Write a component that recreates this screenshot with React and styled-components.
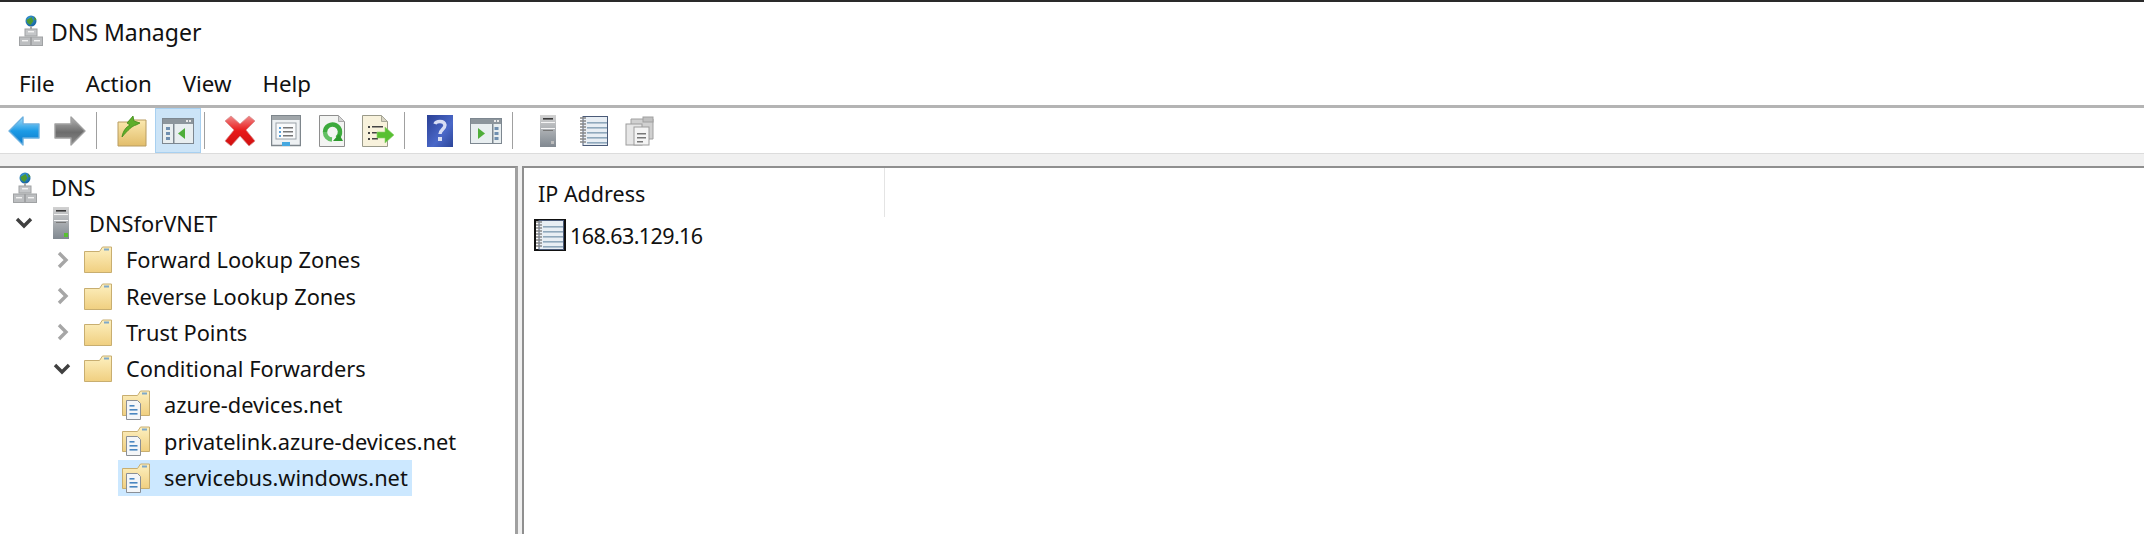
import React from 'react';
import styled, { createGlobalStyle } from 'styled-components';

const GlobalStyle = createGlobalStyle`
  html, body { margin: 0; padding: 0; background: #fff; }
  body { font-family: "Noto Sans", "Open Sans", "Liberation Sans", sans-serif; color: #111; }
  * { box-sizing: border-box; }
`;

const Window = styled.div`
  width: 2144px;
  height: 534px;
  display: flex;
  flex-direction: column;
  overflow: hidden;
  background: #fff;
`;

const TitleBar = styled.div`
  height: 60px;
  padding: 13px 0 0 19px;
  display: flex;
  align-items: flex-start;
  gap: 8px;
  border-top: 2px solid #2a2a2a;
  font-size: 23px;
  line-height: 32px;
`;

const TitleText = styled.span`
  margin-top: 1px;
`;

const MenuBar = styled.div`
  height: 45px;
  padding: 2px 0 0 19px;
  display: flex;
  align-items: center;
  gap: 31px;
  font-size: 22.3px;
`;

const Toolbar = styled.div`
  height: 49px;
  padding-left: 1px;
  display: flex;
  align-items: stretch;
  border-top: 3px solid #b4b4b4;
  border-bottom: 1px solid #dcdcdc;
`;

const ToolButton = styled.div`
  width: 46px;
  display: flex;
  align-items: center;
  justify-content: center;
  background: ${props => (props.active ? '#cce4f7' : 'transparent')};
  box-shadow: ${props => (props.active ? 'inset 0 0 0 1px #a8d0f0' : 'none')};
`;

const ToolSeparator = styled.div`
  width: 1px;
  margin: 4px 12px 4px 3px;
  background: #a0a0a0;
`;

const Strip = styled.div`
  height: 12px;
  background: #f0f0f0;
`;

const Panes = styled.div`
  flex: 1;
  display: flex;
  background: #f0f0f0;
  min-height: 0;
`;

const TreePane = styled.div`
  width: 518px;
  padding-top: 1px;
  background: #fff;
  border-top: 2px solid #8f8f8f;
  border-right: 3px solid #a0a0a0;
`;

const ListPane = styled.div`
  flex: 1;
  margin-left: 4px;
  background: #fff;
  border-top: 2px solid #8f8f8f;
  border-left: 2px solid #8f8f8f;
`;

const TreeRow = styled.div`
  height: 36.3px;
  padding-left: ${props => props.indent}px;
  display: flex;
  align-items: center;
  font-size: 21.8px;
`;

const Expander = styled.span`
  width: ${props => props.width}px;
  flex: none;
  display: flex;
  align-items: center;
`;

const NodeBody = styled.span`
  display: flex;
  align-items: center;
  width: 294px;
  height: 36px;
  padding-left: 4px;
  background: ${props => (props.selected ? '#cce8ff' : 'transparent')};
`;

const NodeIcon = styled.span`
  width: ${props => props.width}px;
  flex: none;
  display: flex;
  align-items: center;
`;

const NodeLabel = styled.span`
  white-space: nowrap;
`;

const ListHeader = styled.div`
  width: 361px;
  height: 49px;
  padding: 1px 0 0 14px;
  display: flex;
  align-items: center;
  font-size: 21.5px;
  border-right: 1px solid #e4e4e4;
`;

const ListRow = styled.div`
  height: 36px;
  padding-left: 10px;
  display: flex;
  align-items: center;
  gap: 4px;
  font-size: 21.5px;
  letter-spacing: -0.6px;
`;

const BackArrow = () => (
  <svg width="32" height="30" viewBox="0 0 32 30">
    <defs>
      <linearGradient id="ba" x1="0" y1="0" x2="0" y2="1">
        <stop offset="0" stopColor="#a4dcf8" />
        <stop offset="0.5" stopColor="#1c9be6" />
        <stop offset="1" stopColor="#0c78c8" />
      </linearGradient>
    </defs>
    <path d="M1 15 15 1v7h16v14H15v7z" fill="url(#ba)" stroke="#6ab0e0" strokeWidth="1.4" strokeLinejoin="round" />
  </svg>
);

const ForwardArrow = () => (
  <svg width="32" height="30" viewBox="0 0 32 30">
    <defs>
      <linearGradient id="fa" x1="0" y1="0" x2="0" y2="1">
        <stop offset="0" stopColor="#b4b4b4" />
        <stop offset="0.55" stopColor="#6c6c6c" />
        <stop offset="1" stopColor="#8a8a8a" />
      </linearGradient>
    </defs>
    <path d="M31 15 17 1v7H1v14h16v7z" fill="url(#fa)" stroke="#a0a0a0" strokeWidth="1.4" strokeLinejoin="round" />
  </svg>
);

const UpFolder = () => (
  <svg width="30" height="32" viewBox="0 0 30 32">
    <defs>
      <linearGradient id="uf" x1="0" y1="0" x2="0" y2="1">
        <stop offset="0" stopColor="#fbe9b0" />
        <stop offset="1" stopColor="#e2bd6a" />
      </linearGradient>
    </defs>
    <path d="M1 7h10l2-2h16v26H1z" fill="url(#uf)" stroke="#b89c60" />
    <path d="M5 22c1-6 4-10 8-12l-3-2 6-7 1 5 6 2-4 2c-4 1-8 5-14 12z" fill="#5fae2a" stroke="#3f8a18" strokeWidth="0.8" />
  </svg>
);

const TreeToggleIcon = ({ flip }) => (
  <svg width="32" height="26" viewBox="0 0 32 26">
    <rect x="0.5" y="0.5" width="31" height="25" fill="#e8eef0" stroke="#7d8790" />
    <rect x="1" y="1" width="30" height="5" fill="#8c959c" />
    <rect x="24" y="2" width="2" height="2" fill="#e8e8e8" />
    <rect x="27" y="2" width="2" height="2" fill="#e8e8e8" />
    <rect x={flip ? 22 : 11} y="6" width="1.5" height="19" fill="#7d8790" />
    {flip ? (
      <g fill="#6f8fb0">
        <rect x="24.5" y="9" width="4" height="3" />
        <rect x="24.5" y="14" width="4" height="3" />
        <rect x="24.5" y="19" width="4" height="3" />
        <path d="M8 10l7 5.5L8 21z" fill="#4fae3a" />
      </g>
    ) : (
      <g fill="#6f8fb0">
        <rect x="4" y="9" width="4" height="3" />
        <rect x="4" y="14" width="4" height="3" />
        <rect x="4" y="19" width="4" height="3" />
        <path d="M23 10l-7 5.5 7 5.5z" fill="#4fae3a" />
      </g>
    )}
  </svg>
);

const DeleteIcon = () => (
  <svg width="32" height="32" viewBox="0 0 32 32">
    <defs>
      <linearGradient id="dl" x1="0" y1="0" x2="0" y2="1">
        <stop offset="0" stopColor="#f08a8a" />
        <stop offset="0.5" stopColor="#e81818" />
        <stop offset="1" stopColor="#d01010" />
      </linearGradient>
    </defs>
    <path d="M1 6 7 1l9 8 9-8 6 5-9 9 9 11-6 5-9-10-9 10-6-5 9-11z" fill="url(#dl)" stroke="#d89090" strokeWidth="0.8" />
  </svg>
);

const PropertiesIcon = () => (
  <svg width="30" height="32" viewBox="0 0 30 32">
    <rect x="0.5" y="0.5" width="29" height="30" fill="#eef1f3" stroke="#7e868c" strokeWidth="1.5" />
    <rect x="1" y="1" width="28" height="4" fill="#a0a6aa" />
    <rect x="5" y="8" width="20" height="16" fill="#fafbfc" stroke="#9aa2a8" />
    <rect x="8" y="12" width="2" height="2" fill="#5aa0d8" />
    <rect x="8" y="16" width="2" height="2" fill="#5aa0d8" />
    <rect x="8" y="20" width="2" height="2" fill="#5aa0d8" />
    <rect x="12" y="12" width="10" height="1.5" fill="#777" />
    <rect x="12" y="16" width="10" height="1.5" fill="#777" />
    <rect x="12" y="20" width="10" height="1.5" fill="#777" />
    <rect x="11" y="27" width="8" height="4" fill="#46a8e0" />
  </svg>
);

const RefreshIcon = () => (
  <svg width="26" height="32" viewBox="0 0 26 32">
    <path d="M0.5 0.5h19l6 6v25H0.5z" fill="#f3f4f2" stroke="#8e8e8e" />
    <path d="M19.5 0.5v6h6z" fill="#d4d4d4" stroke="#a8a8a8" />
    <path d="M6 17a7.5 7.5 0 1 1 12 6" fill="none" stroke="#3caa3c" strokeWidth="4.4" />
    <path d="M6 17a7.5 7.5 0 0 0 7 7.5" fill="none" stroke="#62c062" strokeWidth="4.4" />
    <path d="M14 26h10l-4-7z" fill="#2d9a2d" />
  </svg>
);

const ExportIcon = () => (
  <svg width="32" height="32" viewBox="0 0 32 32">
    <path d="M0.5 0.5h19l6 6v25H0.5z" fill="#f8f2dc" stroke="#9a9a8a" />
    <path d="M19.5 0.5v6h6z" fill="#d8d4c4" stroke="#a8a898" />
    <g fill="#444">
      <rect x="6" y="11" width="2" height="2" />
      <rect x="6" y="17" width="2" height="2" />
      <rect x="6" y="23" width="2" height="2" />
      <rect x="10" y="11" width="11" height="1.5" />
      <rect x="10" y="17" width="7" height="1.5" />
      <rect x="10" y="23" width="6" height="1.5" />
    </g>
    <path d="M15 17h8v-5l9 8-9 8v-5h-8z" fill="#58c032" stroke="#8fd070" strokeWidth="0.6" />
  </svg>
);

const HelpIcon = () => (
  <svg width="26" height="32" viewBox="0 0 26 32">
    <defs>
      <linearGradient id="hp" x1="0" y1="0" x2="1" y2="1">
        <stop offset="0" stopColor="#2a3f94" />
        <stop offset="0.6" stopColor="#4a68c8" />
        <stop offset="1" stopColor="#2c4598" />
      </linearGradient>
    </defs>
    <rect width="26" height="32" fill="url(#hp)" />
    <path d="M8 9c1-3 9-4 10 1 0 4-5 5-5 9" fill="none" stroke="#d8def4" strokeWidth="3.4" />
    <rect x="11" y="22" width="4" height="4" fill="#d8def4" />
  </svg>
);

const ServerIcon = ({ led, width = 16, height = 32 }) => (
  <svg width={width} height={height} viewBox="0 0 16 32">
    <defs>
      <linearGradient id={led ? 'sv1' : 'sv2'} x1="0" y1="0" x2="0" y2="1">
        <stop offset="0" stopColor="#d2d2d2" />
        <stop offset="1" stopColor="#808890" />
      </linearGradient>
    </defs>
    <rect width="16" height="32" fill={`url(#${led ? 'sv1' : 'sv2'})`} />
    <rect x="3" y="3" width="10" height="1.6" fill="#3a3a3a" />
    <rect x="1" y="7" width="14" height="1" fill="#f4f4f4" />
    <rect x="1" y="13" width="14" height="1" fill="#f4f4f4" />
    <rect x="3" y="15" width="10" height="1" fill="#777" />
    {led ? <rect x="11" y="26" width="4" height="4" fill="#58c032" /> : <rect x="11" y="26" width="3" height="3" fill="#bbb" />}
  </svg>
);

const NotebookIcon = ({ framed }) => (
  <svg width={framed ? 32 : 28} height={framed ? 32 : 30} viewBox={framed ? '-2 -1 32 32' : '0 0 28 30'}>
    {framed && <rect x="-1" y="0" width="30" height="30" fill="none" stroke="#111" strokeWidth="2" />}
    <rect x="3" y="0.5" width="24.5" height="29" fill="#e8eef4" stroke="#4a5a78" />
    <g fill="#8fa8bc">
      <rect x="7" y="6" width="20" height="1.6" />
      <rect x="7" y="11" width="20" height="1.6" />
      <rect x="7" y="16" width="20" height="1.6" />
      <rect x="7" y="21" width="20" height="1.6" />
      <rect x="7" y="26" width="20" height="1.6" />
    </g>
    <path d="M0 2h6M0 5h6M0 8h6M0 11h6M0 14h6M0 17h6M0 20h6M0 23h6M0 26h6" stroke="#888" strokeWidth="1.6" />
  </svg>
);

const CopyIcon = () => (
  <svg width="30" height="30" viewBox="0 0 30 30">
    <path d="M6 3h22v20H6z" fill="#d0d0d0" stroke="#a0a0a0" />
    <rect x="18" y="1" width="10" height="5" fill="#c0c0c0" stroke="#a0a0a0" />
    <rect x="1" y="8" width="16" height="21" fill="#e6e6e6" stroke="#9c9c9c" />
    <rect x="9" y="11" width="15" height="18" fill="#f4f4f4" stroke="#9c9c9c" />
    <rect x="12" y="17" width="9" height="1.5" fill="#777" />
    <rect x="12" y="21" width="9" height="1.5" fill="#777" />
    <rect x="12" y="25" width="6" height="1.5" fill="#777" />
  </svg>
);

const DnsIcon = ({ uid }) => (
  <svg width="24" height="31" viewBox="0 0 24 31">
    <defs>
      <radialGradient id={uid} cx="0.4" cy="0.35" r="0.7">
        <stop offset="0" stopColor="#3fa0e0" />
        <stop offset="1" stopColor="#14609a" />
      </radialGradient>
    </defs>
    <circle cx="12" cy="6" r="5.5" fill={`url(#${uid})`} />
    <path d="M7.5 5l5-3 2 4-3 4-3-2zM15 1.5l2.5 3-2 1z" fill="#4f9a2f" />
    <rect x="11" y="11" width="2" height="3" fill="#a8a8a8" />
    <rect x="6" y="14" width="12" height="7" fill="#c4c6c8" stroke="#a0a2a4" />
    <rect x="9" y="16" width="6" height="1.4" fill="#f2f2f2" />
    <rect x="0.5" y="22" width="11" height="8.5" fill="#bcbec0" stroke="#a0a2a4" />
    <rect x="12.5" y="22" width="11" height="8.5" fill="#bcbec0" stroke="#a0a2a4" />
    <rect x="3" y="25" width="6" height="1.4" fill="#f2f2f2" />
    <rect x="15" y="25" width="6" height="1.4" fill="#f2f2f2" />
  </svg>
);

const FolderShape = ({ uid, bottom = 26.5 }) => (
  <>
    <defs>
      <linearGradient id={uid} x1="0" y1="0" x2="0" y2="1">
        <stop offset="0" stopColor="#fdf0c0" />
        <stop offset="1" stopColor="#f0cf80" />
      </linearGradient>
    </defs>
    <path d={`M0.5 ${bottom}V5.5h15l3-4.5h9V${bottom}z`} fill={`url(#${uid})`} stroke="#c8ae70" />
    <rect x="20" y="2.5" width="5" height="2" fill="#7fa8c8" />
  </>
);

const FolderIcon = ({ uid }) => (
  <svg width="28" height="27" viewBox="0 0 28 27">
    <FolderShape uid={uid} />
  </svg>
);

const ZoneIcon = ({ uid }) => (
  <svg width="28" height="30" viewBox="0 0 28 30">
    <FolderShape uid={uid} bottom={25.5} />
    <path d="M4.5 10.5h11l3 3v16h-14z" fill="#f4f6f8" stroke="#8a8f96" />
    <g fill="#4a86c0">
      <rect x="7.5" y="15" width="5" height="1.6" />
      <rect x="7.5" y="19" width="8" height="1.6" />
      <rect x="7.5" y="23" width="8" height="1.6" />
    </g>
  </svg>
);

const Chevron = ({ open, dim }) => (
  <svg width="18" height="18" viewBox="0 0 18 18">
    <polyline
      points={open ? '2,5 9,12 16,5' : '5,2 12,9 5,16'}
      fill="none"
      stroke={dim ? '#a6a6a6' : '#404040'}
      strokeWidth="3.4"
    />
  </svg>
);

const zones = ['Forward Lookup Zones', 'Reverse Lookup Zones', 'Trust Points'];
const forwarders = ['azure-devices.net', 'privatelink.azure-devices.net', 'servicebus.windows.net'];

export default function App() {
  return (
    <Window>
      <GlobalStyle />
      <TitleBar>
        <DnsIcon uid="globe-title" />
        <TitleText>DNS Manager</TitleText>
      </TitleBar>
      <MenuBar>
        <span>File</span>
        <span>Action</span>
        <span>View</span>
        <span>Help</span>
      </MenuBar>
      <Toolbar>
        <ToolButton><BackArrow /></ToolButton>
        <ToolButton><ForwardArrow /></ToolButton>
        <ToolSeparator />
        <ToolButton><UpFolder /></ToolButton>
        <ToolButton active><TreeToggleIcon /></ToolButton>
        <ToolSeparator />
        <ToolButton><DeleteIcon /></ToolButton>
        <ToolButton><PropertiesIcon /></ToolButton>
        <ToolButton><RefreshIcon /></ToolButton>
        <ToolButton><ExportIcon /></ToolButton>
        <ToolSeparator />
        <ToolButton><HelpIcon /></ToolButton>
        <ToolButton><TreeToggleIcon flip /></ToolButton>
        <ToolSeparator />
        <ToolButton><ServerIcon /></ToolButton>
        <ToolButton><NotebookIcon /></ToolButton>
        <ToolButton><CopyIcon /></ToolButton>
      </Toolbar>
      <Strip />
      <Panes>
        <TreePane>
          <TreeRow indent={13}>
            <NodeIcon width={38}><DnsIcon uid="globe-tree" /></NodeIcon>
            <NodeLabel>DNS</NodeLabel>
          </TreeRow>
          <TreeRow indent={15}>
            <Expander width={38}><Chevron open /></Expander>
            <NodeIcon width={36}><ServerIcon led /></NodeIcon>
            <NodeLabel>DNSforVNET</NodeLabel>
          </TreeRow>
          {zones.map((zone, i) => (
            <TreeRow indent={54} key={zone}>
              <Expander width={30}><Chevron dim /></Expander>
              <NodeIcon width={42}><FolderIcon uid={`folder-${i}`} /></NodeIcon>
              <NodeLabel>{zone}</NodeLabel>
            </TreeRow>
          ))}
          <TreeRow indent={53}>
            <Expander width={31}><Chevron open /></Expander>
            <NodeIcon width={42}><FolderIcon uid="folder-cond" /></NodeIcon>
            <NodeLabel>Conditional Forwarders</NodeLabel>
          </TreeRow>
          {forwarders.map((name, i) => (
            <TreeRow indent={118} key={name}>
              <NodeBody selected={i === 2}>
                <NodeIcon width={42}><ZoneIcon uid={`zone-${i}`} /></NodeIcon>
                <NodeLabel>{name}</NodeLabel>
              </NodeBody>
            </TreeRow>
          ))}
        </TreePane>
        <ListPane>
          <ListHeader>IP Address</ListHeader>
          <ListRow>
            <NotebookIcon framed />
            <span>168.63.129.16</span>
          </ListRow>
        </ListPane>
      </Panes>
    </Window>
  );
}
